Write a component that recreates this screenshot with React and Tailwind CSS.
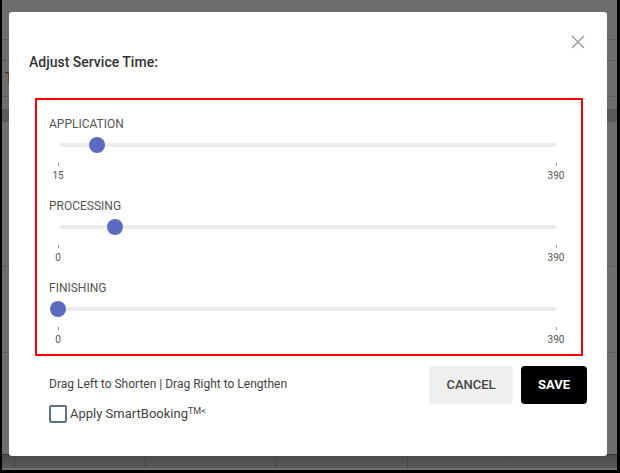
import React from "react";

function SliderBlock({ label, min, max, thumb, first }) {
  return (
    <div className={first ? "" : "mt-[16px]"}>
      <div className="pl-[12px] text-[12px] leading-[16px] text-[#555] uppercase">{label}</div>
      <div className="relative mt-[5px] ml-[22px] mr-[24px] h-[16px] flex items-center">
        <div className="h-[4px] w-full rounded-full bg-[#ececec]" />
        <div
          className="absolute top-0 h-[16px] w-[16px] rounded-full bg-[#5c6bc0]"
          style={{ left: thumb - 8 }}
        />
      </div>
      <div className="ml-[21px] mr-[25px] mt-[10px] flex justify-between">
        <div className="w-0 flex flex-col items-center">
          <div className="h-[3px] w-[1px] bg-[#999]" />
          <div className="mt-[4px] text-[10px] leading-[12px] text-[#555]">{min}</div>
        </div>
        <div className="w-0 flex flex-col items-center">
          <div className="h-[3px] w-[1px] bg-[#999]" />
          <div className="mt-[4px] text-[10px] leading-[12px] text-[#555]">{max}</div>
        </div>
      </div>
    </div>
  );
}

export default function App() {
  return (
    <div
      className="relative w-[620px] h-[473px] border-l-2 border-r-[3px] border-b-[3px] border-black bg-[#6e6e6e] overflow-hidden"
      style={{ fontFamily: "Roboto, 'Liberation Sans', sans-serif" }}
    >
      {/* backdrop content */}
      <div className="flex flex-col">
        <div className="h-[40px] border-b border-[#5e5e5e]" />
        <div className="h-[21px] border-b border-[#5e5e5e]" />
        <div className="h-[36px] border-b border-[#5e5e5e] flex items-center pl-[3px] text-[14px] text-[#4a2e00]">T</div>
        <div className="h-[12px]" />
        <div className="h-[13px] bg-[#5a5a5a]" />
        <div className="h-[145px] border-b border-[#5e5e5e]" />
        <div className="h-[86px] border-b border-[#5e5e5e]" />
        <div className="h-[101px]" />
        <div className="h-[14px] flex bg-gradient-to-b from-[#4a4a4a] to-[#5a5a5a] border-t border-[#3a3a3a]">
          <div className="w-[13px] border-r border-[#444]" />
          <div className="w-[131px] border-r border-[#444]" />
          <div className="w-[131px] border-r border-[#444]" />
          <div className="w-[131px] border-r border-[#444]" />
        </div>
      </div>

      {/* modal */}
      <div className="absolute left-[7px] top-[12px] w-[598px] h-[444px] bg-white rounded-[3px] flex flex-col">
        <div className="relative">
          <div className="pt-[40px] pl-[20px] text-[14px] leading-[20px] font-medium text-[#333]">
            Adjust Service Time:
          </div>
          <svg
            className="absolute left-[562px] top-[23px]"
            width="14"
            height="14"
            viewBox="0 0 14 14"
          >
            <path d="M1 1 L13 13 M13 1 L1 13" stroke="#999" strokeWidth="1.4" fill="none" />
          </svg>
        </div>

        <div className="mt-[26px] ml-[26px] mr-[24px] border-2 border-[#ff0000] pt-[16px] pb-[8px]">
          <SliderBlock label="Application" min="15" max="390" thumb={38} first />
          <SliderBlock label="Processing" min="0" max="390" thumb={56} />
          <SliderBlock label="Finishing" min="0" max="390" thumb={-1} />
        </div>

        <div className="mt-[10px] pl-[40px] pr-[20px] flex justify-between">
          <div className="flex flex-col">
            <div className="mt-[11px] text-[12px] leading-[14px] text-[#444]">
              Drag Left to Shorten | Drag Right to Lengthen
            </div>
            <div className="mt-[14px] flex items-center">
              <div className="w-[18px] h-[18px] rounded-[2px] border-2 border-[#5b7281]" />
              <span className="ml-[3px] text-[13px] leading-[16px] text-[#444]">
                Apply SmartBooking<sup className="text-[9px]">TM&lt;</sup>
              </span>
            </div>
          </div>
          <div className="flex gap-[8px] h-[38px]">
            <button className="w-[84px] h-[38px] rounded-[4px] bg-[#efefef] text-[13px] font-medium text-[#444]">
              CANCEL
            </button>
            <button className="w-[66px] h-[38px] rounded-[4px] bg-black text-[13px] font-bold text-white">
              SAVE
            </button>
          </div>
        </div>
      </div>
    </div>
  );
}
